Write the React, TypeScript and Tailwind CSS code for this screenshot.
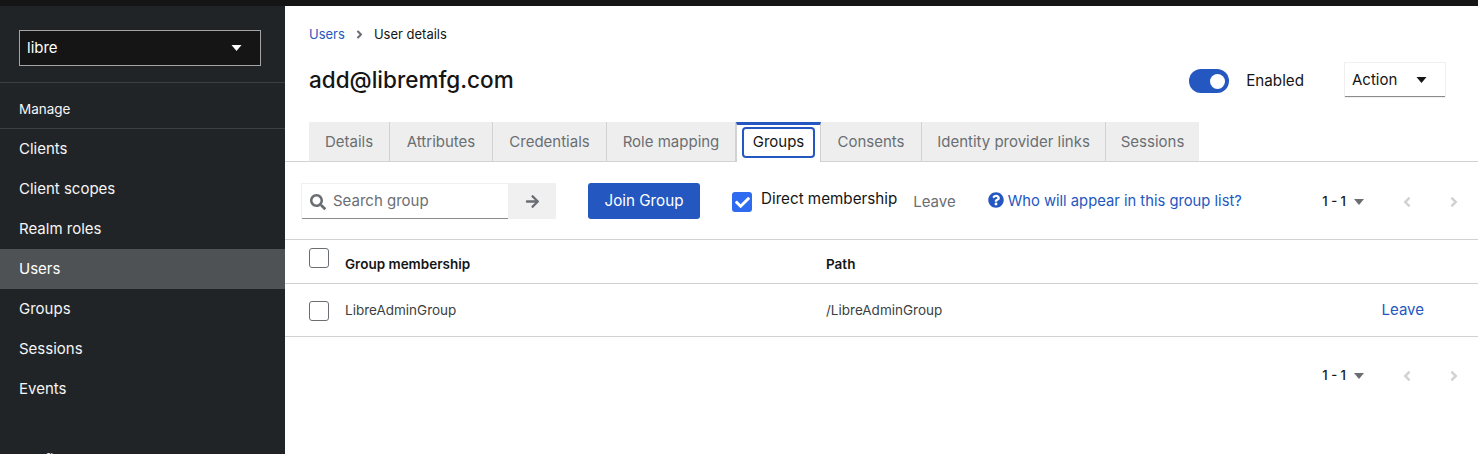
import { FaAngleLeft, FaAngleRight, FaArrowRight, FaCheck, FaQuestionCircle, FaSearch } from "react-icons/fa";

const FONT = "font-['Inter','Noto_Sans',sans-serif]";
const NAV = ["Clients", "Client scopes", "Realm roles", "Users", "Groups", "Sessions", "Events"];
const TABS: [string, string][] = [
  ["Details", "w-[81px]"],
  ["Attributes", "w-[103px]"],
  ["Credentials", "w-[114px]"],
  ["Role mapping", "w-[129px]"],
  ["Groups", "w-[85px]"],
  ["Consents", "w-[101px]"],
  ["Identity provider links", "w-[184px]"],
  ["Sessions", "w-[93px]"],
];

function Caret({ className }: { className: string }) {
  return (
    <svg viewBox="0 0 10 6" className={className} fill="currentColor">
      <path d="M0 0h10L5 6z" />
    </svg>
  );
}

function Sidebar() {
  return (
    <aside className="flex h-[448px] w-[285px] shrink-0 flex-col overflow-hidden bg-[#212427] text-[#f5f5f5]">
      <div className="shrink-0 border-b border-[#3c3f42] pb-4 pl-[19px] pr-6 pt-6">
        <div className="flex h-9 items-center justify-between border border-[#a3a3a3] bg-[#151515] pl-[7px] pr-[18px] text-[15px] text-white">
          libre
          <Caret className="h-[6px] w-[11px]" />
        </div>
      </div>
      <div className="flex h-[46px] shrink-0 items-center border-b border-[#3c3f42] px-[19px] pt-2 text-[13.5px]">
        Manage
      </div>
      <nav className="flex shrink-0 flex-col text-[15px]">
        {NAV.map((item) => (
          <div
            key={item}
            className={`flex h-10 items-center px-[19px] ${item === "Users" ? "bg-[#4f5255] text-white" : ""}`}
          >
            {item}
          </div>
        ))}
      </nav>
      <div className="mt-10 shrink-0 px-[19px] text-[13.5px] leading-5">Configure</div>
    </aside>
  );
}

function Pager() {
  return (
    <div className="flex items-center text-[13px] font-medium text-[#151515]">
      <span className="whitespace-nowrap">1 - 1</span>
      <Caret className="ml-2 h-[6px] w-[10px] text-[#6a6e73]" />
      <FaAngleLeft className="ml-[35px] h-4 w-4 text-[#d2d2d2]" />
      <FaAngleRight className="ml-[31px] h-4 w-4 text-[#d2d2d2]" />
    </div>
  );
}

function Tabs() {
  return (
    <div className="flex h-10 border-b border-[#d2d2d2] pl-6">
      {TABS.map(([label, width]) =>
        label === "Groups" ? (
          <div
            key={label}
            className={`${width} -mb-px flex flex-col border-x border-[#d2d2d2] border-t-[3px] border-t-[#2457c0] bg-white px-[5px] pt-[2px] text-[15px]`}
          >
            <div className="flex h-[31px] items-center justify-center rounded-[4px] border-2 border-[#2457c0] text-[#151515]">
              {label}
            </div>
          </div>
        ) : (
          <div
            key={label}
            className={`${width} flex items-center justify-center border-r border-[#d2d2d2] bg-[#eeeeee] pt-[2px] text-[15px] text-[#6a6e73] last:border-r-0`}
          >
            {label}
          </div>
        ),
      )}
    </div>
  );
}

function Toolbar() {
  return (
    <div className="flex h-[77px] items-start pl-4 pr-4 pt-[21px] text-[15px]">
      <div className="flex h-9 w-[255px]">
        <div className="flex w-[208px] items-center gap-[7px] border border-b-0 border-[#f0f0f0] pl-2 text-[#6a6e73] shadow-[inset_0_-1px_0_#8a8d90]">
          <FaSearch className="h-4 w-4 text-[#6a6e73]" />
          Search group
        </div>
        <div className="flex flex-1 items-center justify-center bg-[#f0f0f0] text-[#6a6e73]">
          <FaArrowRight className="h-[15px] w-[15px]" />
        </div>
      </div>
      <button className="ml-[32px] h-9 w-[112px] rounded-[3px] bg-[#2457c0] text-[15.2px] text-white">Join Group</button>
      <div className="ml-[32px] mt-[9px] flex h-5 w-5 items-center justify-center rounded-[3px] bg-[#2e6bf0] text-white">
        <FaCheck className="h-[15px] w-[15px]" />
      </div>
      <span className="ml-[9px] mt-[6px] whitespace-nowrap text-[15.2px] leading-5 text-[#151515]">Direct membership</span>
      <span className="ml-4 mt-[8px] text-[#6a6e73]">Leave</span>
      <FaQuestionCircle className="ml-[32px] mt-[9px] h-4 w-4 text-[#2457c0]" />
      <span className="ml-1 mt-[7px] whitespace-nowrap text-[14.75px] text-[#2457c0]">
        Who will appear in this group list?
      </span>
      <div className="ml-auto mt-[9px]">
        <Pager />
      </div>
    </div>
  );
}

function Checkbox({ className = "" }: { className?: string }) {
  return <div className={`h-5 w-5 rounded-[3px] border border-[#6a6e73] bg-white ${className}`} />;
}

function Table() {
  return (
    <div className="border-t border-[#d2d2d2]">
      <div className="flex h-[44px] items-center border-b border-[#d2d2d2] pl-6 text-[13.5px] font-semibold text-[#151515]">
        <Checkbox className="-mt-[8px]" />
        <span className="ml-[16px] mt-[5px] w-[481px]">Group membership</span>
        <span className="mt-[5px]">Path</span>
      </div>
      <div className="flex h-[53px] items-center border-b border-[#d2d2d2] pl-6 pr-[54px] pt-[1px] text-[13.5px] text-[#3c3f42]">
        <Checkbox />
        <span className="ml-[16px] w-[481px]">LibreAdminGroup</span>
        <span>/LibreAdminGroup</span>
        <span className="ml-auto text-[15px] text-[#2457c0]">Leave</span>
      </div>
    </div>
  );
}

export default function App() {
  return (
    <div className={`h-[454px] overflow-hidden bg-white ${FONT}`}>
      <div className="h-[6px] bg-[#151515]" />
      <div className="flex">
        <Sidebar />
        <main className="min-w-0 flex-1">
          <div className="flex items-center gap-2 pl-6 pt-5 text-[13px] leading-4">
            <span className="text-[#2457c0]">Users</span>
            <FaAngleRight className="h-[13px] w-[13px] text-[#6a6e73]" />
            <span className="text-[#151515]">User details</span>
          </div>
          <div className="flex h-[80px] items-start pl-6 pr-[32px] pt-5">
            <h1 className="mt-[2px] text-[22.5px] font-medium leading-8 text-[#151515]">add@libremfg.com</h1>
            <div className="ml-auto mt-[7px] flex h-6 w-10 items-center justify-end rounded-full bg-[#2457c0] pr-1">
              <div className="h-[15px] w-[15px] rounded-full bg-white" />
            </div>
            <span className="ml-[17px] mt-[9px] text-[15.2px] leading-5 text-[#151515]">Enabled</span>
            <div className="ml-10 flex h-9 w-[102px] items-center border border-[#f0f0f0] pl-[7px] text-[15px] text-[#151515] shadow-[inset_0_-1px_0_#8a8d90]">
              Action
              <Caret className="ml-[19px] h-[6px] w-[11px]" />
            </div>
          </div>
          <Tabs />
          <Toolbar />
          <Table />
          <div className="flex justify-end pl-6 pr-4 pt-[29px]">
            <Pager />
          </div>
        </main>
      </div>
    </div>
  );
}
